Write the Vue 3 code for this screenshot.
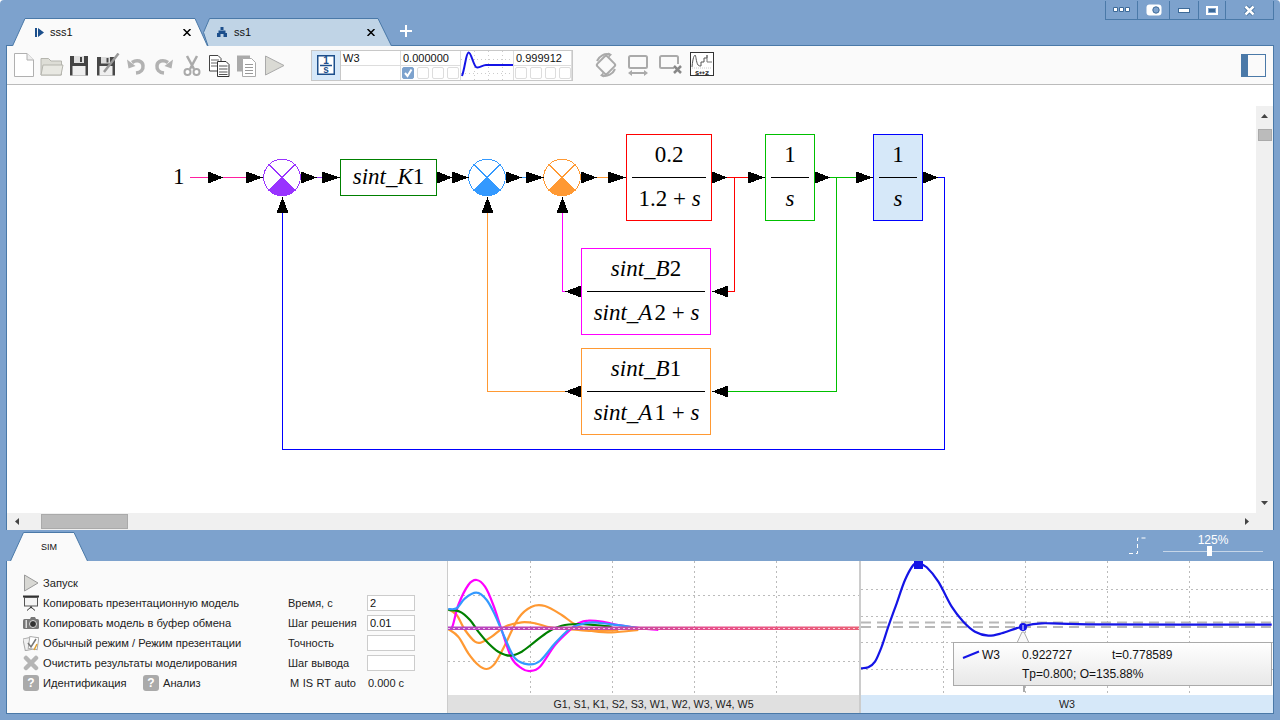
<script setup>
const rightArrows = [[208,223],[246,263],[301,317],[322,340],[437,452],[452,469],[506,522],[526,544],[581,597],[608,626],[712,727],[748,765],[815,830],[856,873],[923,938]]
const leftArrows = [[581,565,291.5],[728,712,291.5],[581,565,391.5],[728,712,391.5]]
const upArrows = [282.5,487.5,562.5]
const arrows = [
  ...rightArrows.map(([a,b]) => `${a},171.5 ${b},177.5 ${a},183.5`),
  ...leftArrows.map(([a,b,y]) => `${a},${y-6} ${b},${y} ${a},${y+6}`),
  ...upArrows.map(x => `${x-6},213 ${x},197 ${x+6},213`)
]
const wires = [
  ['#ff1fa0','190,177.5 258,177.5'],
  ['#9933ff','305,177.5 328,177.5'],
  ['#3399ff','515,177.5 532,177.5'],
  ['#ff9933','590,177.5 615,177.5'],
  ['#ff0000','720,177.5 755,177.5'],
  ['#ff0000','734.5,177.5 734.5,291.5 720,291.5'],
  ['#00c000','822,177.5 862,177.5'],
  ['#00c000','836.5,177.5 836.5,391.5 720,391.5'],
  ['#0000ff','930,177.5 944.5,177.5 944.5,449.5 282.5,449.5 282.5,205'],
  ['#ff00ff','572,291.5 562.5,291.5 562.5,205'],
  ['#ff9933','572,391.5 487.5,391.5 487.5,205']
]
const sums = [[282,'#9933ff'],[487,'#3399ff'],[562,'#ff9933']]
const boxes = [
  [340.5,159.5,96,36,'#008000','#fff'],
  [626.5,134.5,85,86,'#ff0000','#fff'],
  [765.5,134.5,49,86,'#00c000','#fff'],
  [873.5,134.5,49,86,'#0000ff','#d6e8f9'],
  [581.5,248.5,129,86,'#ff00ff','#fff'],
  [581.5,348.5,129,86,'#ff9933','#fff']
]
const fracs = [[632,706,177.5],[771,809,177.5],[879,917,177.5],[587,705,291.5],[587,705,391.5]]

function smooth(raw, ox, oy) {
  const p = raw.map(([x,y]) => [x/3+ox, y/3+oy])
  let d = `M${p[0][0].toFixed(1)} ${p[0][1].toFixed(1)}`
  for (let i = 0; i < p.length-1; i++) {
    const a = p[i-1] || p[i], b = p[i], c = p[i+1], e = p[i+2] || c
    const c1 = [b[0]+(c[0]-a[0])/6, b[1]+(c[1]-a[1])/6]
    const c2 = [c[0]-(e[0]-b[0])/6, c[1]-(e[1]-b[1])/6]
    d += `C${c1[0].toFixed(1)} ${c1[1].toFixed(1)} ${c2[0].toFixed(1)} ${c2[1].toFixed(1)} ${c[0].toFixed(1)} ${c[1].toFixed(1)}`
  }
  return d
}
const chartCurves = [
  ['#ff9933', smooth([[10,222],[40,245],[70,295],[100,330],[125,342],[150,325],[180,270],[220,190],[260,155],[300,153],[350,180],[390,208],[440,228],[500,232],[580,225]],445,555)],
  ['#ff9933', smooth([[10,162],[35,180],[60,225],[90,260],[110,262],[140,245],[180,215],[230,202],[270,205],[320,218],[400,225],[450,228],[520,225]],445,555)],
  ['#ff00ff', smooth([[10,220],[22,215],[40,150],[70,90],[95,75],[120,95],[145,150],[170,225],[200,310],[230,340],[255,348],[285,335],[330,270],[375,225],[400,205],[430,197],[470,200],[520,210],[570,218],[640,225]],445,555)],
  ['#008000', smooth([[10,165],[45,170],[75,195],[100,230],[130,265],[160,290],[195,302],[230,290],[270,260],[310,230],[350,212],[400,207],[450,210],[500,215]],445,555)],
  ['#3399ff', smooth([[10,162],[35,160],[60,130],[95,113],[125,135],[150,180],[180,250],[210,310],[250,328],[285,318],[330,265],[370,225],[400,210],[440,202],[500,208],[560,216],[600,222]],445,555)]
]
const w3Curve = smooth([[18,415],[40,412],[60,395],[80,350],[100,290],[125,220],[150,150],[175,105],[190,100],[215,112],[250,155],[290,230],[325,275],[360,305],[400,317],[440,310],[500,290],[560,280],[700,283],[1250,284]],855,530)
const grid1V = [530.5,612.5,694.5,776.5]
const grid1H = [595.5,661.5]
const grid2V = [943.5,1025.5,1107.5,1189.5]
const grid2H = [589.5,616.5,642.5,669.5]
const tools = ['new','open','save','saveas','undo','redo','cut','copy','paste','play']
const otherChecks = [1,2,3]
const otherChecks2 = [1,2,3,4]
</script>

<template>
  <div class="app">
    <header class="head">
      <div class="tabs">
        <div class="tab tab-on">
          <svg class="tab-bg" width="196" height="28" viewBox="0 0 196 28"><path d="M0.5 28L13 .5H183L195.5 28" fill="#fafafa" stroke="#4a79a8"/></svg>
          <svg class="tab-ic" width="9" height="9" viewBox="0 0 9 9"><path d="M0 0h2v9H0zM3 0l6 4.5L3 9z" fill="#1c4f8c"/></svg>
          <span class="tab-name">sss1</span>
          <svg class="tab-x" width="8" height="7" viewBox="0 0 8 7"><path d="M.5 0L7.5 7M7.5 0L.5 7" stroke="#000" stroke-width="1.5"/></svg>
        </div>
        <div class="tab tab-off">
          <svg class="tab-bg" width="189" height="28" viewBox="0 0 189 28"><path d="M5 28L.5 14.5 6.5.5H175L188.5 28" fill="#c0d4e6" stroke="#4a79a8"/></svg>
          <svg class="tab-ic" width="10" height="10" viewBox="0 0 10 10"><path d="M3.5 0h3v3h-3zM1.5 3.500h7v2.500H10v4H6.500V7h-3v3H0V6h1.500z" fill="#1c4f8c"/></svg>
          <span class="tab-name">ss1</span>
          <svg class="tab-x" width="8" height="7" viewBox="0 0 8 7"><path d="M.5 0L7.5 7M7.5 0L.5 7" stroke="#000" stroke-width="1.5"/></svg>
        </div>
        <svg class="plus" width="12" height="12" viewBox="0 0 12 12"><path d="M6 0v12M0 6h12" stroke="#fff" stroke-width="2"/></svg>
      </div>
      <div class="winbtns">
        <div class="wb w32"><svg width="18" height="6" viewBox="0 0 18 6"><path d="M.5.500h4v4h-4zM6.500.500h4v4h-4zM12.500.500h4v4h-4z" fill="#fff" stroke="#3d6a98"/></svg></div>
        <div class="wb w32"><svg width="16" height="12" viewBox="0 0 16 12"><rect x=".5" y=".5" width="15" height="11" rx="3" fill="#fff"/><circle cx="10" cy="6" r="3.200" fill="#7da2cd" stroke="#3d6a98"/></svg></div>
        <div class="wb w29"><svg width="12" height="5" viewBox="0 0 12 5"><rect x=".5" y=".5" width="11" height="4" fill="#fff" stroke="#3d6a98"/></svg></div>
        <div class="wb w27"><svg width="12" height="9" viewBox="0 0 12 9"><rect x="1" y="1" width="10" height="7" fill="none" stroke="#fff" stroke-width="2"/><rect x="3" y="3" width="6" height="3" fill="#3d6a98"/></svg></div>
        <div class="wb w48"><svg width="11" height="11" viewBox="0 0 11 11"><path d="M1.500 1.500L9.500 9.500M9.500 1.500L1.500 9.500" stroke="#3d6a98" stroke-width="4"/><path d="M1.500 1.500L9.500 9.500M9.500 1.500L1.500 9.500" stroke="#fff" stroke-width="2.500"/></svg></div>
      </div>
    </header>

    <section class="doc">
      <div class="toolbar">
        <div class="tools">
          <div v-for="t in tools" :key="t" class="tool">
            <svg width="24" height="24" viewBox="0 0 24 24">
              <template v-if="t==='new'">
                <path d="M2.500.5H15L21.500 7V23.500H2.500Z" fill="#fff" stroke="#b0b0b0"/><path d="M15 .5V7H21.500" fill="#eee" stroke="#b0b0b0"/>
              </template>
              <template v-else-if="t==='open'">
                <path d="M1 22V5.500h7.500L11 8h10.500v14z" fill="#ddddd6" stroke="#b5b5ae"/><path d="M1 22L3 12h20l-2 10z" fill="#e8e8e2" stroke="#b5b5ae"/>
              </template>
              <template v-else-if="t==='save'">
                <rect x="2" y="3" width="18" height="19.500" fill="#444"/><rect x="6" y="3" width="10" height="7" fill="#e0e0e0"/><rect x="12" y="4" width="2" height="5" fill="#444"/><rect x="4.500" y="13" width="13" height="9.500" fill="#efefef"/>
              </template>
              <template v-else-if="t==='saveas'">
                <rect x="1" y="4" width="18" height="18.500" fill="#484848"/><rect x="5" y="4" width="9" height="6.500" fill="#dcdcdc"/><rect x="10.500" y="5" width="2" height="4.500" fill="#484848"/><rect x="3.500" y="13" width="13" height="9.500" fill="#efefef"/><path d="M22.500.5L8 19" stroke="#999" stroke-width="2.500"/>
              </template>
              <template v-else-if="t==='undo'">
                <path d="M12 20C17 19.500 19.500 16.500 19 12.500 18.500 8 13 6 8 9.500" fill="none" stroke="#b2b2b2" stroke-width="3.500"/><path d="M3 6.500l1.500 9 7-2.500z" fill="#b2b2b2"/>
              </template>
              <template v-else-if="t==='redo'">
                <path d="M12 20C7 19.500 4.500 16.500 5 12.500 5.500 8 11 6 16 9.500" fill="none" stroke="#b2b2b2" stroke-width="3.500"/><path d="M21 6.500l-1.500 9-7-2.500z" fill="#b2b2b2"/>
              </template>
              <template v-else-if="t==='cut'">
                <path d="M7 3l7 13M17 3l-7 13" stroke="#aaa" stroke-width="2.500"/><circle cx="7.500" cy="19" r="3" fill="#fff" stroke="#aaa" stroke-width="2"/><circle cx="16.500" cy="19" r="3" fill="#fff" stroke="#aaa" stroke-width="2"/>
              </template>
              <template v-else-if="t==='copy'">
                <path d="M1.500 2.500H10l3 3V18H1.500z" fill="#fff" stroke="#444"/><path d="M3 7h8M3 10h8M3 13h8" stroke="#666"/><path d="M9.500 8.500H18l3 3V23.500H9.500z" fill="#fff" stroke="#333"/><path d="M11 13h8.500M11 16h8.500M11 19h8.500M11 21.500h8.500" stroke="#555"/>
              </template>
              <template v-else-if="t==='paste'">
                <rect x="1" y="2.500" width="13" height="16" fill="#aaa"/><path d="M6.500 5.500h9l4 4v14h-13z" fill="#fff" stroke="#aaa"/><path d="M9 11.500h8M9 14.500h8M9 17.500h8M9 20.500h8" stroke="#999"/>
              </template>
              <template v-else>
                <path d="M1.500 3L20 12.500 1.500 22z" fill="#dadad4" stroke="#aaa"/>
              </template>
            </svg>
          </div>
        </div>

        <div class="block">
          <div class="blk-ic">
            <svg width="18" height="20" viewBox="0 0 18 20">
              <rect x=".75" y=".75" width="16.500" height="18.500" fill="#fff" stroke="#1c4f8c" stroke-width="1.500"/>
              <text x="9" y="8.800" text-anchor="middle" class="sv-b">1</text>
              <path d="M3 10.500h12" stroke="#1c4f8c" stroke-width="1.500"/>
              <text x="9" y="17.500" text-anchor="middle" class="sv-b">s</text>
            </svg>
          </div>
          <div class="cell">W3</div>
          <div class="cell">0.000000</div>
          <div class="blk-plot">
            <svg width="52" height="30" viewBox="461 49 52 30">
              <path d="M461 57.500h52M461 71.500h52M474.500 49v30M488.500 49v30M502.500 49v30" stroke="#ccc" stroke-dasharray="1 3"/>
              <path d="M462 74C465 66 466 51 468.500 50.500 471 50 473 62 476 65 479 67 482 63 486 63H513" fill="none" stroke="#1414e6" stroke-width="2"/>
            </svg>
          </div>
          <div class="cell">0.999912</div>
          <div class="cell"></div>
          <div class="cell checks">
            <span class="chk chk-on"><svg width="12" height="12" viewBox="0 0 12 12"><path d="M3 6l2.500 3L9.500 2.500" fill="none" stroke="#fff" stroke-width="2"/></svg></span>
            <span v-for="c in otherChecks" :key="c" class="chk"></span>
          </div>
          <div class="cell checks">
            <span v-for="c in otherChecks2" :key="c" class="chk"></span>
          </div>
        </div>

        <div class="tools2">
          <div class="tool2">
            <svg width="26" height="26" viewBox="0 0 26 26" fill="none" stroke="#aaa">
              <rect x="6" y="6" width="14" height="14" rx="2" transform="rotate(45 13 13)" stroke-width="2"/>
              <path d="M4 9A11 11 0 0 1 17 2.500M22 17A11 11 0 0 1 9 23.500" stroke-width="2"/>
              <path d="M15 .5l4 2-3 3zM11 25.500l-4-2 3-3z" fill="#aaa" stroke="none"/>
            </svg>
          </div>
          <div class="tool2">
            <svg width="26" height="26" viewBox="0 0 26 26" fill="none" stroke="#aaa">
              <rect x="4" y="4" width="18" height="12" rx="1.500" stroke-width="2"/>
              <path d="M5 21h16" stroke-width="2"/><path d="M3 21l4-3v6zM23 21l-4-3v6z" fill="#aaa" stroke="none"/>
            </svg>
          </div>
          <div class="tool2">
            <svg width="26" height="26" viewBox="0 0 26 26" fill="none" stroke="#aaa">
              <path d="M17 16H4.500A1.500 1.500 0 0 1 3 14.500V5.500A1.500 1.500 0 0 1 4.500 4h15A1.500 1.500 0 0 1 21 5.500V12" stroke-width="2"/>
              <path d="M17 14l7 7M24 14l-7 7" stroke="#888" stroke-width="2.500"/>
            </svg>
          </div>
          <div class="tool2">
            <svg width="24" height="24" viewBox="0 0 24 24">
              <rect x=".5" y=".5" width="23" height="23" fill="#fff" stroke="#333"/>
              <path d="M2 15C3 5 4 4 5 3 6 3 6 10 8 13 9 14 10 14 11 14V10H14V6H17V3" fill="none" stroke="#555"/>
              <path d="M17 3V10H22" fill="none" stroke="#777"/>
              <path d="M2 16h20" stroke="#ccc" stroke-dasharray="1 1"/>
              <text x="12" y="22.500" text-anchor="middle" class="sv-m">s↔z</text>
            </svg>
          </div>
        </div>

        <svg class="side" width="25" height="23" viewBox="0 0 25 23"><rect x=".5" y=".5" width="24" height="22" fill="none" stroke="#4a79a8"/><rect x="0" y="0" width="7" height="23" fill="#4a79a8"/></svg>
      </div>

      <div class="canvas">
        <svg class="diagram" width="1249" height="428" viewBox="7 85 1249 428">
          <g shape-rendering="crispEdges">
            <rect v-for="(b,i) in boxes" :key="'b'+i" :x="b[0]" :y="b[1]" :width="b[2]" :height="b[3]" :fill="b[5]" :stroke="b[4]"/>
            <polyline v-for="(w,i) in wires" :key="'w'+i" :points="w[1]" :stroke="w[0]" fill="none"/>
            <line v-for="(f,i) in fracs" :key="'f'+i" :x1="f[0]" :x2="f[1]" :y1="f[2]" :y2="f[2]" stroke="#000"/>
          </g>
          <g v-for="s in sums" :key="s[0]" shape-rendering="crispEdges">
            <circle :cx="s[0]" cy="177.5" r="18.300" fill="#fff" :stroke="s[1]"/>
            <path :d="`M${s[0]-13} 164.500L${s[0]+13} 190.500M${s[0]+13} 164.500L${s[0]-13} 190.500`" :stroke="s[1]"/>
            <path :d="`M${s[0]} 177.500L${s[0]-13} 190.500A18.300 18.300 0 0 0 ${s[0]+13} 190.500Z`" :fill="s[1]"/>
          </g>
          <polygon v-for="(a,i) in arrows" :key="'a'+i" :points="a" fill="#000" shape-rendering="crispEdges"/>
          <g class="math">
            <text x="173" y="184">1</text>
            <text x="388.500" y="184" text-anchor="middle"><tspan class="it">sint_K</tspan>1</text>
            <text x="669" y="161.700" text-anchor="middle">0.2</text>
            <text x="669.500" y="205.700" text-anchor="middle">1.2 + <tspan class="it">s</tspan></text>
            <text x="790" y="161.700" text-anchor="middle">1</text>
            <text x="790" y="205.700" text-anchor="middle" class="it">s</text>
            <text x="898" y="161.700" text-anchor="middle">1</text>
            <text x="898" y="205.700" text-anchor="middle" class="it">s</text>
            <text x="646" y="276" text-anchor="middle"><tspan class="it">sint_B</tspan>2</text>
            <text x="646.500" y="320" text-anchor="middle"><tspan class="it">sint_A</tspan><tspan dx="2">2 + </tspan><tspan class="it">s</tspan></text>
            <text x="646" y="376" text-anchor="middle"><tspan class="it">sint_B</tspan>1</text>
            <text x="646.500" y="420" text-anchor="middle"><tspan class="it">sint_A</tspan><tspan dx="2">1 + </tspan><tspan class="it">s</tspan></text>
          </g>
        </svg>
        <div class="vscroll">
          <svg class="up" width="7" height="4" viewBox="0 0 7 4"><path d="M3.500 0L7 4H0z" fill="#444"/></svg>
          <div class="vthumb"></div>
          <svg class="down" width="7" height="4" viewBox="0 0 7 4"><path d="M0 0H7L3.500 4z" fill="#444"/></svg>
        </div>
      </div>
      <div class="hscroll">
        <svg class="left" width="4" height="7" viewBox="0 0 4 7"><path d="M4 0V7L0 3.500z" fill="#444"/></svg>
        <div class="hthumb"></div>
        <svg class="right" width="4" height="7" viewBox="0 0 4 7"><path d="M0 0V7L4 3.500z" fill="#444"/></svg>
      </div>
    </section>

    <div class="simbar">
      <div class="simtab">
        <svg class="tab-bg" width="78" height="29" viewBox="0 0 78 29"><path d="M.5 29L13.500 .5H64L77.500 29" fill="#fafafa" stroke="#4a79a8"/></svg>
        <span class="simtab-t">SIM</span>
      </div>
      <svg class="stair" width="18" height="17" viewBox="0 0 18 17"><path d="M0 16.500h8.500V1H18" fill="none" stroke="#fff" stroke-dasharray="4 3"/></svg>
      <div class="zoomer">
        <div class="zoom-t">125%</div>
        <div class="slider"><span class="thumb"></span></div>
      </div>
    </div>

    <section class="panel">
      <div class="sim">
        <div class="sim-grid">
          <div class="row">
            <svg width="16" height="18" viewBox="0 0 16 18"><path d="M1.500 1L15 9 1.500 17z" fill="#d8d8d4" stroke="#999"/></svg>
            <span>Запуск</span>
          </div>
          <span></span><span></span>

          <div class="row">
            <svg width="16" height="16" viewBox="0 0 16 16"><path d="M0 1.500h16" stroke="#333" stroke-width="2"/><rect x="1.500" y="2.500" width="13" height="8.500" fill="#f4f4f4" stroke="#555"/><path d="M8 11v2.500M8 12l-4 3.500M8 12l4 3.500" stroke="#333"/></svg>
            <span>Копировать презентационную модель</span>
          </div>
          <span class="lb">Время, с</span><input class="inp" value="2" />

          <div class="row">
            <svg width="16" height="16" viewBox="0 0 16 16"><rect x="0" y="4" width="16" height="10" rx="1.500" fill="#777"/><rect x="2.500" y="5" width="1.500" height="8" fill="#ddd"/><circle cx="10" cy="9" r="3.500" fill="#333" stroke="#ddd"/><path d="M7 4l1-2h4l1 2z" fill="#777"/></svg>
            <span>Копировать модель в буфер обмена</span>
          </div>
          <span class="lb">Шаг решения</span><input class="inp" value="0.01" />

          <div class="row">
            <svg width="16" height="16" viewBox="0 0 16 16"><rect x="1" y="3" width="9" height="12" transform="rotate(-12 5 9)" fill="#f0f0f0" stroke="#aaa"/><rect x="6" y="2" width="9" height="12" transform="rotate(8 10 8)" fill="#fff" stroke="#aaa"/><path d="M5 8l3 4 5-8" fill="none" stroke="#777" stroke-width="1.500"/><path d="M14 9l-3 6" stroke="#e0a030" stroke-width="1.500"/></svg>
            <span>Обычный режим / Режим презентации</span>
          </div>
          <span class="lb">Точность</span><input class="inp" value="" />

          <div class="row">
            <svg width="16" height="16" viewBox="0 0 16 16"><path d="M3 3L13 13M13 3L3 13" stroke="#b5b5b5" stroke-width="4.500" stroke-linecap="round"/></svg>
            <span>Очистить результаты моделирования</span>
          </div>
          <span class="lb">Шаг вывода</span><input class="inp" value="" />

          <div class="row">
            <span class="q">?</span><span class="q-l">Идентификация</span>
            <span class="q">?</span><span>Анализ</span>
          </div>
          <div class="status"><span>M</span><span>IS</span><span>RT</span><span>auto</span></div>
          <span class="time">0.000 с</span>
        </div>
      </div>

      <div class="chart chart1">
        <svg class="plot" width="411" height="134" viewBox="448 561 411 134">
          <g stroke="#bbb" stroke-dasharray="2 3" shape-rendering="crispEdges">
            <line v-for="x in grid1V" :key="x" :x1="x" :x2="x" y1="561" y2="695"/>
            <line v-for="y in grid1H" :key="y" x1="448" x2="859" :y1="y" :y2="y"/>
          </g>
          <path v-for="(c,i) in chartCurves" :key="i" :d="c[1]" fill="none" :stroke="c[0]" stroke-width="2.200"/>
          <defs>
            <linearGradient id="mid" x1="0" x2="1" y1="0" y2="0">
              <stop offset="0" stop-color="#b844c4"/><stop offset=".4" stop-color="#c648a8"/><stop offset=".65" stop-color="#e8508a"/><stop offset="1" stop-color="#ea6078"/>
            </linearGradient>
          </defs>
          <rect x="448" y="626.500" width="411" height="3.500" fill="url(#mid)"/>
          <line x1="448" x2="859" y1="628.500" y2="628.500" stroke="#fff" stroke-dasharray="2 3" opacity=".7" shape-rendering="crispEdges"/>
        </svg>
        <div class="cap cap1">G1, S1, K1, S2, S3, W1, W2, W3, W4, W5</div>
      </div>

      <div class="chart chart2">
        <svg class="plot" width="412" height="134" viewBox="861 561 412 134">
          <g stroke="#bbb" stroke-dasharray="2 3" shape-rendering="crispEdges">
            <line v-for="x in grid2V" :key="x" :x1="x" :x2="x" y1="561" y2="695"/>
            <line v-for="y in grid2H" :key="y" x1="861" x2="1273" :y1="y" :y2="y"/>
          </g>
          <path d="M861 622.500H1273M861 627H1273" stroke="#b8b8b8" stroke-width="2" stroke-dasharray="10 6"/>
          <path :d="w3Curve" fill="none" stroke="#1414e6" stroke-width="2.200"/>
          <rect x="914" y="561" width="9" height="8" fill="#1414e6"/>
          <circle cx="1023" cy="627" r="4" fill="#1414e6"/>
          <path d="M1023 625v5" stroke="#fff"/>
          <path d="M1016 645L1022 632 1024 632 1030 645z" fill="#f8f8f8" stroke="#aaa"/>
          <path d="M1024 686v6" stroke="#aaa" stroke-width="2"/>
        </svg>
        <div class="tip">
          <div class="tip-r">
            <svg width="18" height="9" viewBox="0 0 18 9"><path d="M1 8L17 1.500" stroke="#1414e6" stroke-width="2"/></svg>
            <span class="tip-n">W3</span><span class="tip-v">0.922727</span><span>t=0.778589</span>
          </div>
          <div class="tip-b">Tp=0.800; O=135.88%</div>
        </div>
        <div class="cap cap2">W3</div>
      </div>
    </section>
  </div>
</template>

<style>
html, body { margin: 0; background: #fff; }
</style>

<style scoped>
.app {
  width: 1280px; height: 720px; background: #7da2cd; display: flex; flex-direction: column;
  font: 11px "Liberation Sans", Arial, sans-serif; color: #222; overflow: hidden;
  border-radius: 4px 4px 0 0;
}
.head { height: 45px; display: flex; justify-content: space-between; flex: none; }
.tabs { display: flex; align-items: flex-end; padding-left: 12px; position: relative; }
.tab { position: relative; height: 28px; display: flex; align-items: center; color: #111; margin-bottom: -1px; }
.tab-bg { position: absolute; left: 0; top: 0; }
.tab-ic, .tab-name, .tab-x { position: relative; }
.tab-on { width: 196px; padding: 0 17px 0 23px; box-sizing: border-box; z-index: 2; }
.tab-on .tab-ic { margin-right: 6px; }
.tab-off { width: 189px; margin-left: -5px; padding: 0 17px 0 14px; box-sizing: border-box; z-index: 1; }
.tab-off .tab-ic { margin-right: 7px; }
.tab-x { margin-left: auto; }
.plus { margin: 0 0 8px 8px; }
.winbtns { display: flex; height: 19px; margin-top: 1px; border-bottom: 1px solid #4a79a8; border-right: 1px solid #4a79a8; margin-right: 6px; box-sizing: border-box; }
.wb { border-left: 1px solid #4a79a8; display: flex; align-items: center; justify-content: center; box-sizing: border-box; }
.w32 { width: 32px; } .w29 { width: 29px; } .w27 { width: 27px; } .w48 { width: 48px; }

.doc { margin: 0 6px; border: 1px solid #4a79a8; border-bottom: 0; height: 485px; box-sizing: border-box; display: flex; flex-direction: column; flex: none; background: #fff; }
.toolbar { height: 39px; box-sizing: border-box; background: #fafafa; border-bottom: 1px solid #bbb; display: flex; align-items: center; padding-left: 3px; flex: none; }
.tools { display: flex; }
.tool { width: 28px; display: flex; justify-content: center; }
.block {
  margin-left: 21px; width: 262px; height: 31px; box-sizing: border-box; border: 1px solid #c8c8c8;
  display: grid; grid-template-columns: 29px 60px 60px 53px 58px; grid-template-rows: 15px 14px; background: #fff; color: #111;
}
.blk-ic { grid-row: 1 / 3; background: #d6e8f9; display: flex; align-items: center; justify-content: center; border-right: 1px solid #c8c8c8; }
.cell { border-right: 1px solid #ddd; border-bottom: 1px solid #ddd; padding-left: 2px; line-height: 14px; box-sizing: border-box; }
.block > .cell:nth-child(7), .block > .cell:nth-child(8), .block > .cell:nth-child(6) { border-bottom: 0; }
.blk-plot { grid-row: 1 / 3; grid-column: 4; border-right: 1px solid #ddd; overflow: hidden; }
.blk-plot svg { display: block; }
.checks { display: flex; gap: 3px; padding: 1px 0 0 1px; }
.chk { width: 12px; height: 12px; box-sizing: border-box; border: 1px solid #ddd; border-radius: 2px; display: block; }
.chk svg { display: block; margin: -1px; }
.chk-on { background: #7da2cd; border-color: #7da2cd; }
.cell.checks { grid-row: 2; }
.block > .cell:nth-child(6) { grid-column: 2; grid-row: 2; }
.block > .cell:nth-child(7) { grid-column: 3; }
.block > .cell:nth-child(8) { grid-column: 5; }
.tools2 { display: flex; margin-left: 17px; }
.tool2 { width: 32px; display: flex; justify-content: center; }
.side { margin-left: auto; margin-right: 7px; }

.canvas { flex: 1; display: flex; min-height: 0; }
.diagram { flex: 1; display: block; }
.math { font: 23px "Liberation Serif", "Times New Roman", serif; fill: #000; }
.it { font-style: italic; }
.vscroll { width: 17px; margin-top: 21px; background: #f0f0f0; display: flex; flex-direction: column; align-items: center; flex: none; }
.up { margin-top: 8px; }
.vthumb { width: 14px; height: 12px; margin-top: 11px; background: #bbb; border: 1px solid #aaa; box-sizing: border-box; }
.down { margin-top: auto; margin-bottom: 8px; }
.hscroll { height: 17px; background: #f0f0f0; display: flex; align-items: center; padding-left: 8px; flex: none; }
.hthumb { width: 87px; height: 15px; margin-left: 22px; background: #bbb; border: 1px solid #aaa; box-sizing: border-box; }
.right { margin-left: 1117px; }

.simbar { height: 31px; margin: 0 6px; display: flex; align-items: flex-start; flex: none; padding-left: 4px; position: relative; }
.simtab { width: 78px; height: 29px; margin-top: 2px; position: relative; display: flex; align-items: center; justify-content: center; color: #111; font-size: 9px; }
.simtab-t { position: relative; }
.stair { margin: 7px 0 0 1041px; }
.zoomer { margin-left: 16px; width: 100px; color: #fff; padding-top: 3px; font-size: 12px; text-align: center; }
.zoom-t { line-height: 14px; }
.slider { height: 1px; background: #c6d6e8; margin-top: 4px; position: relative; }
.thumb { position: absolute; left: 44px; top: -5px; width: 5px; height: 10px; background: #fff; }

.panel { height: 153px; margin: 0 6px; border: 1px solid #4a79a8; border-top: 0; box-sizing: border-box; display: flex; background: #fff; flex: none; }
.sim { width: 440px; background: #fafafa; box-sizing: border-box; padding: 12px 0 0 16px; flex: none; }
.sim-grid { display: grid; grid-template-columns: 265px 79px 48px; grid-auto-rows: 20px; align-items: center; }
.row { display: flex; align-items: center; gap: 4px; font-size: 11.150px; }
.row svg { flex: none; }
.lb { display: block; }
.inp { width: 48px; height: 16px; box-sizing: border-box; border: 1px solid #ccc; background: #fff; padding: 0 2px; font: 11px "Liberation Sans", Arial, sans-serif; color: #111; outline: 0; }
.q { width: 16px; height: 16px; border-radius: 3px; background: #aaa; color: #fff; font-weight: bold; font-size: 12px; text-align: center; line-height: 16px; flex: none; }
.q-l { width: 96px; }
.status { display: flex; gap: 3.500px; padding-left: 2px; }
.time { padding-left: 1px; }
.chart { position: relative; display: flex; flex-direction: column; flex: none; box-sizing: border-box; }
.chart1 { border-left: 1px solid #ccc; width: 412px; }
.chart2 { border-left: 2px solid #ccc; width: 414px; }
.plot { display: block; height: 134px; width: 100%; }
.cap { height: 18px; line-height: 18px; text-align: center; font-size: 10.700px; color: #222; }
.cap1 { background: #e0e0e0; }
.cap2 { background: #d6e8f9; }
.tip {
  position: absolute; left: 92px; top: 81px; width: 319px; height: 44px; box-sizing: border-box;
  border: 1px solid #aaa; background: linear-gradient(#fff, #e8e8e8); font-size: 12px; color: #111;
}
.tip-r { display: flex; align-items: center; height: 23px; padding-left: 8px; }
.tip-n { margin-left: 2px; width: 40px; }
.tip-v { width: 90px; }
.tip-b { padding-left: 68px; line-height: 16px; }
.sv-b { font: bold 10px "Liberation Sans", Arial, sans-serif; fill: #1c4f8c; }
.sv-m { font: bold 7px "DejaVu Sans", sans-serif; fill: #333; }
</style>
